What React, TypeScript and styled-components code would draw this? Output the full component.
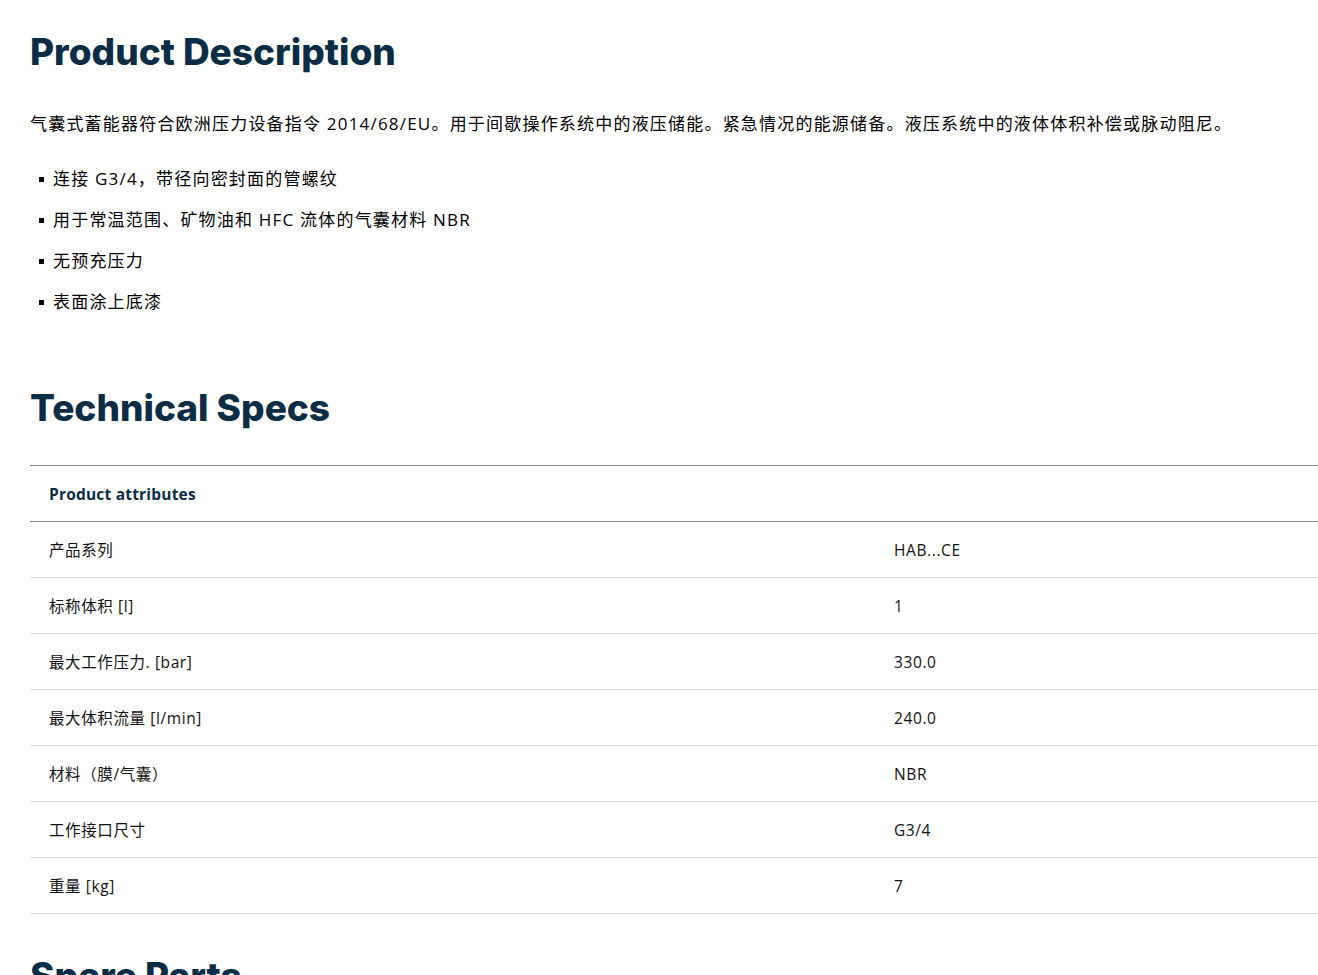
import React from "react";
import styled, { createGlobalStyle } from "styled-components";

const Global = createGlobalStyle`
  html, body { margin: 0; padding: 0; background: #fff; }
  body { font-family: "Open Sans", "Noto Sans CJK SC", sans-serif; color: #000; overflow: hidden; }
`;

const Page = styled.div`
  padding: 28px 0 0 30px;
  width: 1288px;
`;

const H2 = styled.h2<{ $mt: number }>`
  margin: ${(p) => p.$mt}px 0 0 0;
  font-family: Inter, "Noto Sans", sans-serif;
  font-weight: 800;
  font-size: 37px;
  line-height: 48px;
  color: #0b2c45;
  letter-spacing: 0;
`;

const Para = styled.p`
  margin: 36px 0 0 0;
  font-size: 17px;
  line-height: 24px;
  letter-spacing: 1.2px;
`;

const List = styled.ul`
  list-style: none;
  margin: 31px 0 0 0;
  padding: 0;
  display: flex;
  flex-direction: column;
  gap: 17px;
`;

const Item = styled.li`
  display: flex;
  align-items: center;
  gap: 9px;
  font-size: 17px;
  line-height: 24px;
  letter-spacing: 1.2px;
  padding-left: 9px;
  &::before {
    content: "";
    width: 5px;
    height: 5px;
    background: #000;
    flex: none;
  }
`;

const Table = styled.div`
  margin-top: 33px;
  border-top: 1px solid #7d8792;
`;

const Row = styled.div<{ $head?: boolean }>`
  display: grid;
  grid-template-columns: 845px 1fr;
  height: 55px;
  align-items: center;
  border-bottom: 1px solid ${(p) => (p.$head ? "#7d8792" : "#d6d9dc")};
  font-size: ${(p) => (p.$head ? 15.5 : 15.5)}px;
  letter-spacing: ${(p) => (p.$head ? 0.2 : 0.6)}px;
  font-weight: ${(p) => (p.$head ? 700 : 400)};
  color: ${(p) => (p.$head ? "#0b2c45" : "#111")};
`;

const Cell = styled.div`
  padding-left: 19px;
`;

const rows: [string, string][] = [
  ["产品系列", "HAB...CE"],
  ["标称体积 [l]", "1"],
  ["最大工作压力. [bar]", "330.0"],
  ["最大体积流量 [l/min]", "240.0"],
  ["材料（膜/气囊）", "NBR"],
  ["工作接口尺寸", "G3/4"],
  ["重量 [kg]", "7"],
];

export default function App() {
  return (
    <Page>
      <Global />
      <H2 $mt={0}>Product Description</H2>
      <Para>
        气囊式蓄能器符合欧洲压力设备指令 2014/68/EU。用于间歇操作系统中的液压储能。紧急情况的能源储备。液压系统中的液体体积补偿或脉动阻尼。
      </Para>
      <List>
        <Item>连接 G3/4，带径向密封面的管螺纹</Item>
        <Item>用于常温范围、矿物油和 HFC 流体的气囊材料 NBR</Item>
        <Item>无预充压力</Item>
        <Item>表面涂上底漆</Item>
      </List>
      <H2 $mt={70}>Technical Specs</H2>
      <Table>
        <Row $head>
          <Cell>Product attributes</Cell>
        </Row>
        {rows.map(([k, v]) => (
          <Row key={k}>
            <Cell>{k}</Cell>
            <Cell>{v}</Cell>
          </Row>
        ))}
      </Table>
      <H2 $mt={38}>Spare Parts</H2>
    </Page>
  );
}
